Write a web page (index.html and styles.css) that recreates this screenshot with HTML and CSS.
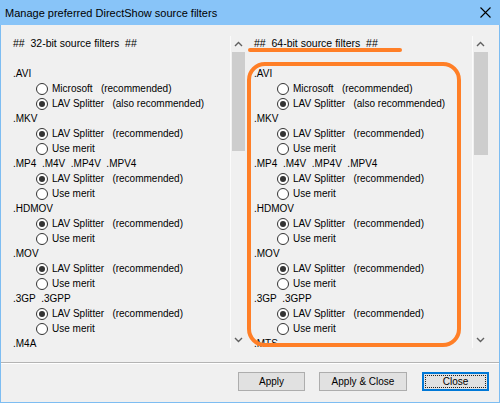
FILE: index.html
```html
<!DOCTYPE html>
<html>
<head>
<meta charset="utf-8">
<link rel="stylesheet" href="styles.css">
</head>
<body>
<div class="window">
  <div class="titlebar">
    <span class="title">Manage preferred DirectShow source filters</span>
    <svg class="close-x" width="11" height="11" viewBox="0 0 11 11"><path d="M0.5 0.5 L10.5 10.5 M10.5 0.5 L0.5 10.5" stroke="#000" stroke-width="1.1" fill="none"/></svg>
  </div>
  <div class="panels">
    <div class="panel panel-left">
      <div class="list">
        <div class="line head">##  32-bit source filters  ##</div>
        <div class="line"></div>
        <div class="line">.AVI</div>
        <div class="opt"><span class="radio"></span><span class="lbl">Microsoft   (recommended)</span></div>
        <div class="opt"><span class="radio on"></span><span class="lbl">LAV Splitter   (also recommended)</span></div>
        <div class="line">.MKV</div>
        <div class="opt"><span class="radio on"></span><span class="lbl">LAV Splitter   (recommended)</span></div>
        <div class="opt"><span class="radio"></span><span class="lbl">Use merit</span></div>
        <div class="line">.MP4  .M4V  .MP4V  .MPV4</div>
        <div class="opt"><span class="radio on"></span><span class="lbl">LAV Splitter   (recommended)</span></div>
        <div class="opt"><span class="radio"></span><span class="lbl">Use merit</span></div>
        <div class="line">.HDMOV</div>
        <div class="opt"><span class="radio on"></span><span class="lbl">LAV Splitter   (recommended)</span></div>
        <div class="opt"><span class="radio"></span><span class="lbl">Use merit</span></div>
        <div class="line">.MOV</div>
        <div class="opt"><span class="radio on"></span><span class="lbl">LAV Splitter   (recommended)</span></div>
        <div class="opt"><span class="radio"></span><span class="lbl">Use merit</span></div>
        <div class="line">.3GP  .3GPP</div>
        <div class="opt"><span class="radio on"></span><span class="lbl">LAV Splitter   (recommended)</span></div>
        <div class="opt"><span class="radio"></span><span class="lbl">Use merit</span></div>
        <div class="line">.M4A</div>
      </div>
      <div class="scrollbar">
        <div class="arrow"><svg width="9" height="6" viewBox="0 0 9 6"><path d="M1 5 L4.5 1.5 L8 5" stroke="#606060" stroke-width="1.4" fill="none"/></svg></div>
        <div class="track"><div class="thumb"></div></div>
        <div class="arrow"><svg width="9" height="6" viewBox="0 0 9 6"><path d="M1 1 L4.5 4.5 L8 1" stroke="#606060" stroke-width="1.4" fill="none"/></svg></div>
      </div>
    </div>
    <div class="panel panel-right">
      <div class="list">
        <div class="line head">##  64-bit source filters  ##</div>
        <div class="line"></div>
        <div class="line">.AVI</div>
        <div class="opt"><span class="radio"></span><span class="lbl">Microsoft   (recommended)</span></div>
        <div class="opt"><span class="radio on"></span><span class="lbl">LAV Splitter   (also recommended)</span></div>
        <div class="line">.MKV</div>
        <div class="opt"><span class="radio on"></span><span class="lbl">LAV Splitter   (recommended)</span></div>
        <div class="opt"><span class="radio"></span><span class="lbl">Use merit</span></div>
        <div class="line">.MP4  .M4V  .MP4V  .MPV4</div>
        <div class="opt"><span class="radio on"></span><span class="lbl">LAV Splitter   (recommended)</span></div>
        <div class="opt"><span class="radio"></span><span class="lbl">Use merit</span></div>
        <div class="line">.HDMOV</div>
        <div class="opt"><span class="radio on"></span><span class="lbl">LAV Splitter   (recommended)</span></div>
        <div class="opt"><span class="radio"></span><span class="lbl">Use merit</span></div>
        <div class="line">.MOV</div>
        <div class="opt"><span class="radio on"></span><span class="lbl">LAV Splitter   (recommended)</span></div>
        <div class="opt"><span class="radio"></span><span class="lbl">Use merit</span></div>
        <div class="line">.3GP  .3GPP</div>
        <div class="opt"><span class="radio on"></span><span class="lbl">LAV Splitter   (recommended)</span></div>
        <div class="opt"><span class="radio"></span><span class="lbl">Use merit</span></div>
        <div class="line">.MTS</div>
      </div>
      <div class="scrollbar">
        <div class="arrow"><svg width="9" height="6" viewBox="0 0 9 6"><path d="M1 5 L4.5 1.5 L8 5" stroke="#606060" stroke-width="1.4" fill="none"/></svg></div>
        <div class="track"><div class="thumb thumb-right"></div></div>
        <div class="arrow"><svg width="9" height="6" viewBox="0 0 9 6"><path d="M1 1 L4.5 4.5 L8 1" stroke="#606060" stroke-width="1.4" fill="none"/></svg></div>
      </div>
    </div>
    <div class="mark-underline"></div>
    <div class="mark-box"></div>
  </div>
  <div class="footer">
    <button class="btn btn-apply">Apply</button>
    <button class="btn btn-applyclose">Apply &amp; Close</button>
    <button class="btn btn-close">Close</button>
  </div>
</div>
</body>
</html>
```

FILE: styles.css
```css
html, body {
  margin: 0;
  padding: 0;
}
body {
  width: 500px;
  height: 403px;
  overflow: hidden;
  background: #f0f0f0;
  font-family: "Liberation Sans", Arial, sans-serif;
  font-size: 10px;
  color: #000;
}
.window {
  box-sizing: border-box;
  width: 500px;
  height: 403px;
  border: 1px solid #7dbdf2;
  border-top: none;
  background: #f0f0f0;
  display: flex;
  flex-direction: column;
}
.titlebar {
  height: 25px;
  margin: 0 -1px;
  background: #88c4f8;
  display: flex;
  align-items: center;
  justify-content: space-between;
  padding: 0 9px 0 5px;
}
.title {
  font-size: 11px;
  color: #000;
}
.close-x {
  display: block;
}
.panels {
  position: relative;
  display: flex;
  margin-top: 11px;
  height: 312px;
}
.panel {
  display: flex;
  height: 312px;
}
.panel-left {
  width: 246px;
}
.panel-right {
  width: 242px;
}
.list {
  flex: 1;
  overflow: hidden;
}
.panel-left .list {
  padding-left: 12px;
}
.panel-right .list {
  padding-left: 7px;
}
.line {
  height: 15px;
  line-height: 15px;
  white-space: pre;
}
.head {
  font-size: 10.5px;
}
.opt {
  height: 15px;
  line-height: 15px;
  display: flex;
  align-items: center;
  padding-left: 23px;
}
.radio {
  box-sizing: border-box;
  width: 12px;
  height: 12px;
  border: 1px solid #333;
  border-radius: 50%;
  background: #fff;
  display: flex;
  align-items: center;
  justify-content: center;
  margin-right: 4px;
  flex: none;
}
.radio.on::before {
  content: "";
  width: 6px;
  height: 6px;
  border-radius: 50%;
  background: #333;
}
.lbl {
  white-space: pre;
}
.scrollbar {
  box-sizing: border-box;
  width: 17px;
  border-left: 1px solid #fbfbfb;
  display: flex;
  flex-direction: column;
  background: #f0f0f0;
}
.arrow {
  height: 16px;
  display: flex;
  align-items: center;
  justify-content: center;
  padding-right: 2px;
}
.track {
  flex: 1;
  padding-left: 1px;
}
.thumb {
  width: 13px;
  height: 99px;
  background: #cdcdcd;
}
.thumb-right {
  width: 14px;
  height: 103px;
}
.mark-underline {
  position: absolute;
  left: 247px;
  top: 12px;
  width: 154px;
  height: 4px;
  border-radius: 2px;
  background: #ff7f27;
}
.mark-box {
  position: absolute;
  left: 246px;
  top: 26px;
  width: 214px;
  height: 285px;
  box-sizing: border-box;
  border: 4px solid #ff7f27;
  border-radius: 18px;
}
.footer {
  margin-top: 14px;
  border-top: 1px solid #b4b4b4;
  box-shadow: inset 0 1px 0 #ffffff;
  padding: 9px 10px 0 0;
  display: flex;
  justify-content: flex-end;
  gap: 14px;
}
.btn {
  box-sizing: border-box;
  height: 19px;
  padding: 0;
  margin: 0;
  font-family: "Liberation Sans", Arial, sans-serif;
  font-size: 10px;
  color: #000;
  background: #e1e1e1;
  border: 1px solid #adadad;
  border-radius: 0;
}
.btn-apply {
  width: 67px;
}
.btn-applyclose {
  width: 88px;
  margin-right: 1px;
}
.btn-close {
  width: 67px;
  position: relative;
  border-color: #0078d7;
  box-shadow: inset 0 0 0 1px #0078d7;
}
.btn-close::after {
  content: "";
  position: absolute;
  left: 2px;
  top: 2px;
  right: 2px;
  bottom: 2px;
  border: 1px dotted #222;
}
```
